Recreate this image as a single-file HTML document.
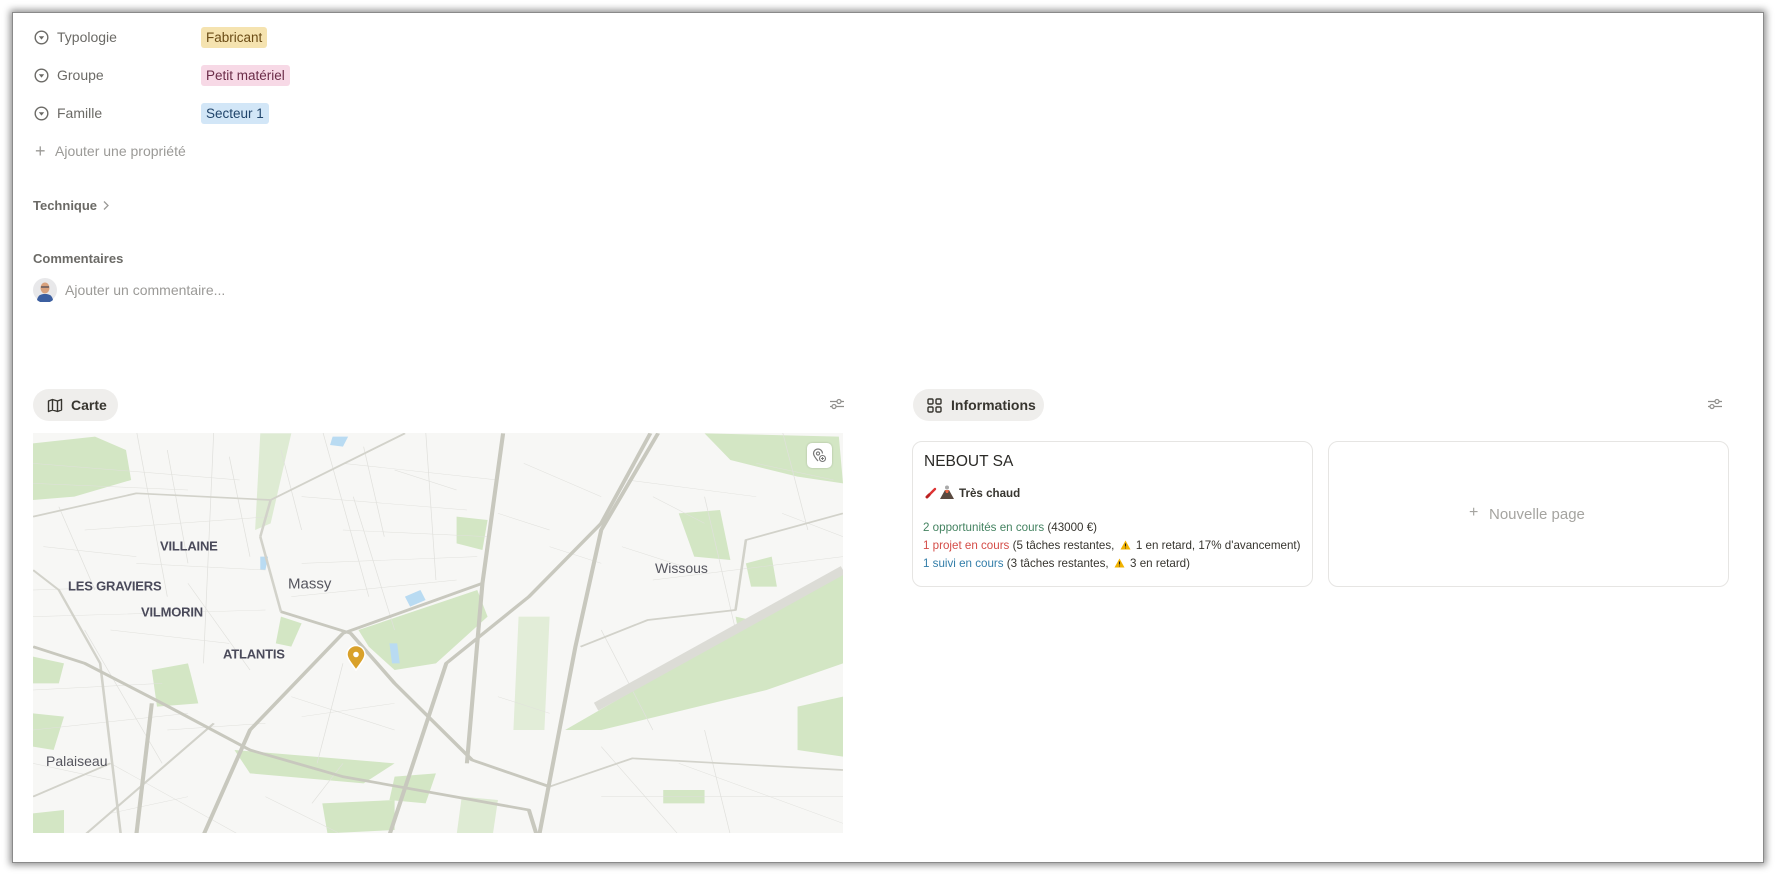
<!DOCTYPE html>
<html><head><meta charset="utf-8"><style>
*{margin:0;padding:0;box-sizing:border-box}
body{width:1776px;height:876px;background:#fff;font-family:"Liberation Sans",sans-serif;position:relative;overflow:hidden;color:#37352f}
.frame{position:absolute;left:12px;top:12px;width:1752px;height:851px;background:#fff;border:1px solid #8a8a8a;box-shadow:0 0 7px 2px rgba(0,0,0,.45)}
.a{position:absolute;white-space:nowrap}
.lbl{font-size:14px;color:#6b6a66}
.pill{position:absolute;height:21px;line-height:21px;padding:0 5px;border-radius:3px;font-size:13.5px}
.ic{position:absolute}
.btn{position:absolute;height:32px;border-radius:16px;background:#efeeec;font-size:14px;font-weight:bold;color:#37352f;line-height:32px}
.card{position:absolute;border:1px solid #e6e5e3;border-radius:10px;background:#fff}
.ml{position:absolute;font-size:13px;font-weight:bold;color:#4a4a5a;transform:translate(-0%,-50%);white-space:nowrap;letter-spacing:-.2px}
.mn{position:absolute;font-size:15px;color:#55555e;transform:translateY(-50%);white-space:nowrap}
.line{position:absolute;left:10px;font-size:11.6px;white-space:nowrap;color:#37352f}
.w{display:inline-block;width:11px;height:10px;vertical-align:-1px;margin:0 2px}
</style></head><body>
<div class="frame"></div>

<svg class="ic" style="left:34px;top:30px" width="15" height="15" viewBox="0 0 15 15"><circle cx="7.5" cy="7.5" r="6.3" fill="none" stroke="#6b6a66" stroke-width="1.4"/><path d="M4.8 6.2h5.4L7.5 9.6z" fill="#6b6a66"/></svg>
<div class="a lbl" style="left:57px;top:29px">Typologie</div>
<div class="pill" style="left:201px;top:27px;background:#f5e3b0;color:#6b4c16">Fabricant</div>

<svg class="ic" style="left:34px;top:68px" width="15" height="15" viewBox="0 0 15 15"><circle cx="7.5" cy="7.5" r="6.3" fill="none" stroke="#6b6a66" stroke-width="1.4"/><path d="M4.8 6.2h5.4L7.5 9.6z" fill="#6b6a66"/></svg>
<div class="a lbl" style="left:57px;top:67px">Groupe</div>
<div class="pill" style="left:201px;top:65px;background:#f7d9e6;color:#6b2c48">Petit matériel</div>

<svg class="ic" style="left:34px;top:106px" width="15" height="15" viewBox="0 0 15 15"><circle cx="7.5" cy="7.5" r="6.3" fill="none" stroke="#6b6a66" stroke-width="1.4"/><path d="M4.8 6.2h5.4L7.5 9.6z" fill="#6b6a66"/></svg>
<div class="a lbl" style="left:57px;top:105px">Famille</div>
<div class="pill" style="left:201px;top:103px;background:#d2e6f7;color:#21456b">Secteur 1</div>

<div class="a" style="left:35px;top:141px;font-size:18px;color:#9b9a97">+</div>
<div class="a" style="left:55px;top:143px;font-size:14px;color:#9b9a97">Ajouter une propriété</div>

<div class="a" style="left:33px;top:198px;font-size:13px;font-weight:bold;color:#6b6a66">Technique</div>
<svg class="ic" style="left:101px;top:200px" width="10" height="11" viewBox="0 0 10 11"><path d="M3 1.5l4 4-4 4" fill="none" stroke="#9b9a97" stroke-width="1.3"/></svg>

<div class="a" style="left:33px;top:251px;font-size:13px;font-weight:bold;color:#6b6a66">Commentaires</div>
<svg class="ic" style="left:33px;top:278px" width="24" height="24" viewBox="0 0 24 24"><circle cx="12" cy="12" r="12" fill="#e8e8ea"/><path d="M4 22c1-5 4-6 8-6s7 1 8 6a12 12 0 0 1-16 0z" fill="#3c5fa0"/><ellipse cx="12" cy="10" rx="4.5" ry="5.5" fill="#d9a27e"/><path d="M8 9h8" stroke="#445" stroke-width="1.2"/></svg>
<div class="a" style="left:65px;top:282px;font-size:14px;color:#9b9a97">Ajouter un commentaire...</div>

<div class="btn" style="left:33px;top:389px;width:85px"><svg style="position:absolute;left:14px;top:9px" width="16" height="15" viewBox="0 0 16 15"><path d="M1.5 3l4-1.5 5 1.5 4-1.5v10.5l-4 1.5-5-1.5-4 1.5z M5.5 1.5v10.5 M10.5 3v10.5" fill="none" stroke="#37352f" stroke-width="1.4" stroke-linejoin="round"/></svg><span style="position:absolute;left:38px">Carte</span></div>
<svg class="ic" style="left:829px;top:397px" width="16" height="14" viewBox="0 0 16 14"><path d="M1 4.5h14M1 9.5h14" stroke="#8f8e8b" stroke-width="1.2"/><circle cx="10" cy="4.5" r="2" fill="#fff" stroke="#8f8e8b" stroke-width="1.2"/><circle cx="5" cy="9.5" r="2" fill="#fff" stroke="#8f8e8b" stroke-width="1.2"/></svg>

<div style="position:absolute;left:33px;top:433px;width:810px;height:400px;overflow:hidden;background:#f7f7f5">
<svg style="position:absolute;left:0;top:-3px" width="810" height="405" viewBox="0 0 1568 1215" preserveAspectRatio="none">
<g fill="#d3e6c4">
<path d="M0 40L120 20 180 60 190 150 80 200 0 210z"/>
<path d="M1300 10L1560 20 1568 160 1480 140 1350 90z"/>
<path d="M1030 900L1568 420 1568 700 1420 780 1100 900z"/>
<path d="M1480 830L1568 800 1568 980 1480 960z"/>
<path d="M630 600L860 480 880 560 780 700 700 720 650 650z"/>
<path d="M390 960L700 1000 640 1060 420 1030z"/>
<path d="M1250 250L1330 240 1350 390 1280 380z"/>
<path d="M0 680L60 700 50 760 0 760z"/>
<path d="M230 720L300 700 320 820 240 830z"/>
<path d="M820 260L880 270 870 360 820 340z"/>
<path d="M1360 560L1450 590 1460 640 1370 640z"/>
<path d="M560 1120L700 1110 700 1200 570 1210z"/>
<path d="M1220 1080L1300 1080 1300 1120 1220 1120z"/>
<path d="M480 560L520 580 500 650 470 640z"/>
<path d="M0 850L60 860 40 960 0 950z"/>
<path d="M940 560L1000 560 990 900 930 900z" opacity=".6"/>
<path d="M440 10L500 10 460 280 430 300z" opacity=".7"/>
<path d="M700 1040L780 1030 760 1120 690 1110z"/>
<path d="M1380 400L1430 380 1440 470 1390 470z"/>
<path d="M0 1150L60 1140 60 1215 0 1215z"/>
<path d="M830 1100L900 1110 890 1215 820 1215z" opacity=".7"/>
</g>
<g fill="#b9dbf2"><path d="M720 500l30-20 10 30-30 20z"/><path d="M580 20l30 0-10 30-25-5z"/><path d="M440 380l15 0-5 40-10 0z"/><path d="M690 640l15 0 5 60-15 0z"/></g>
<g fill="none" stroke="#e0e0dc" stroke-width="1.4" vector-effect="non-scaling-stroke">
<path d="M0 100L400 150M100 300L460 260M200 400L450 420M0 560L450 540M600 100L900 150M600 300L880 320M520 400L860 380M950 100L1100 200M1150 150L1400 200M1200 450L1568 380M200 0L260 500M350 0L330 700M560 0L650 500M760 0L780 450M1300 200L1360 600M1450 0L1500 300M0 900L300 850M500 800L700 900M1100 1100L1568 1100M1300 900L1350 1215M450 1100L600 1215M150 1000L400 1215M100 600L250 1000M600 700L550 1000M20 350L200 380M620 200L700 600M900 250L1000 300"/>
<path d="M0 160L300 180M50 230L120 480M260 60L300 400M380 80L420 380M480 60L520 300M640 50L680 320M700 120L820 180M520 200L840 240M500 500L820 450M0 480L200 470M300 460L420 720M150 600L380 640M0 780L250 760M260 900L450 880M520 860L700 820M1100 600L1200 900M1200 200L1300 280M1400 100L1550 150M1450 250L1568 320M1140 350L1280 420M1000 350L1100 400M1250 1000L1568 1180M1100 950L1250 1215M0 1000L150 1050M150 1150L300 1100M900 800L1000 850M540 1120L600 1000"/>
</g>
<g fill="none" stroke="#d2d2ca" stroke-width="5" vector-effect="non-scaling-stroke" stroke-linejoin="round">
<path d="M0 260L200 190 460 210 720 10"/>
<path d="M440 320L480 545"/>
<path d="M460 210L440 320"/>
<path d="M1060 650L1190 570 1360 540 1380 330 1568 250"/>
<path d="M0 420L50 480 130 700 170 1215"/>
<path d="M1000 1070L1160 985 1568 1020"/>
<path d="M0 1100L150 1000"/>
<path d="M350 880L100 1215"/>
</g>
<g fill="none" stroke="#c8c8be" stroke-width="8" vector-effect="non-scaling-stroke" stroke-linejoin="round">
<path d="M0 650L100 700 250 820 420 960 600 1040 960 1140 975 1215"/>
<path d="M480 545L615 610 700 760 850 990 1000 1070"/>
<path d="M330 1215L420 900 600 610 870 460"/>
<path d="M910 10L870 460 840 1000"/>
<path d="M1195 10L1100 280 960 500 800 700 690 1215"/>
<path d="M1210 10L1100 300 1050 650 980 1215"/>
<path d="M200 1215L230 820"/>
</g>
<path d="M1090 830L1568 420" stroke="#dcdcd6" stroke-width="9" vector-effect="non-scaling-stroke"/>
</svg>
<div class="ml" style="left:127px;top:113px">VILLAINE</div>
<div class="ml" style="left:35px;top:153px">LES GRAVIERS</div>
<div class="ml" style="left:108px;top:179px">VILMORIN</div>
<div class="ml" style="left:190px;top:221px">ATLANTIS</div>
<div class="mn" style="left:255px;top:151px">Massy</div>
<div class="mn" style="left:622px;top:135px;font-size:14px">Wissous</div>
<div class="mn" style="left:13px;top:328px;font-size:14px">Palaiseau</div>
<svg style="position:absolute;left:313px;top:212px" width="20" height="26" viewBox="0 0 20 26"><path d="M10 25C4 17 1 13 1 9.5a9 9 0 0 1 18 0C19 13 16 17 10 25z" fill="#d9a12a" stroke="#fff" stroke-width="1.5"/><circle cx="10" cy="9.5" r="2.8" fill="#fff"/></svg>
<div style="position:absolute;left:774px;top:10px;width:25px;height:25px;background:#fff;border-radius:5px;box-shadow:0 0 2px rgba(0,0,0,.2)"><svg style="position:absolute;left:5px;top:5px" width="15" height="15" viewBox="0 0 15 15"><path d="M6 13C3 9.5 1.5 7.5 1.5 5.5a4.5 4.5 0 0 1 9 0" fill="none" stroke="#777" stroke-width="1.2"/><circle cx="6" cy="5.5" r="1.6" fill="none" stroke="#777" stroke-width="1.1"/><circle cx="10.5" cy="10.5" r="3" fill="#fff" stroke="#777" stroke-width="1.1"/><path d="M10.5 9v3M9 10.5h3" stroke="#777"/></svg></div>
</div>

<div class="btn" style="left:913px;top:389px;width:131px"><svg style="position:absolute;left:14px;top:9px" width="15" height="15" viewBox="0 0 15 15"><g fill="none" stroke="#37352f" stroke-width="1.4"><rect x="1" y="1" width="5" height="5" rx="1.2"/><rect x="9" y="1" width="5" height="5" rx="1.2"/><rect x="1" y="9" width="5" height="5" rx="1.2"/><rect x="9" y="9" width="5" height="5" rx="1.2"/></g></svg><span style="position:absolute;left:38px">Informations</span></div>
<svg class="ic" style="left:1707px;top:397px" width="16" height="14" viewBox="0 0 16 14"><path d="M1 4.5h14M1 9.5h14" stroke="#8f8e8b" stroke-width="1.2"/><circle cx="10" cy="4.5" r="2" fill="#fff" stroke="#8f8e8b" stroke-width="1.2"/><circle cx="5" cy="9.5" r="2" fill="#fff" stroke="#8f8e8b" stroke-width="1.2"/></svg>

<div class="card" style="left:912px;top:441px;width:401px;height:146px">
<div class="a" style="left:11px;top:11px;font-size:15.5px;color:#2b2a27">NEBOUT SA</div>
<svg class="ic" style="left:12px;top:45px" width="12" height="12" viewBox="0 0 12 12"><path d="M2 10L10 2" stroke="#d33" stroke-width="2.4" stroke-linecap="round"/><path d="M2 10L4 8" stroke="#b22" stroke-width="3" stroke-linecap="round"/></svg>
<svg class="ic" style="left:27px;top:43px" width="14" height="14" viewBox="0 0 14 14"><path d="M0 14L5 5h4l5 9z" fill="#5a4a40"/><path d="M5 5h4L8 8 6 8z" fill="#e64"/><circle cx="7" cy="2.5" r="2" fill="#aaa"/></svg>
<div class="a" style="left:46px;top:45px;font-size:11.6px;font-weight:bold">Très chaud</div>
<div class="line" style="top:79px"><span style="color:#448361">2 opportunités en cours</span> (43000 €)</div>
<div class="line" style="top:97px"><span style="color:#d44c47">1 projet en cours</span> (5 tâches restantes, <svg class="w" viewBox="0 0 11 10"><path d="M5.5 0.5L10.5 9.5H0.5z" fill="#f2b300"/><path d="M5.5 3.5v3M5.5 7.6v.8" stroke="#222" stroke-width="1.1"/></svg> 1 en retard, 17% d'avancement)</div>
<div class="line" style="top:115px"><span style="color:#337ea9">1 suivi en cours</span> (3 tâches restantes, <svg class="w" viewBox="0 0 11 10"><path d="M5.5 0.5L10.5 9.5H0.5z" fill="#f2b300"/><path d="M5.5 3.5v3M5.5 7.6v.8" stroke="#222" stroke-width="1.1"/></svg> 3 en retard)</div>
</div>
<div class="card" style="left:1328px;top:441px;width:401px;height:146px">
<div class="a" style="left:140px;top:62px;font-size:16px;color:#a5a4a0">+</div>
<div class="a" style="left:160px;top:64px;font-size:15px;color:#a5a4a0">Nouvelle page</div>
</div>
</body></html>
